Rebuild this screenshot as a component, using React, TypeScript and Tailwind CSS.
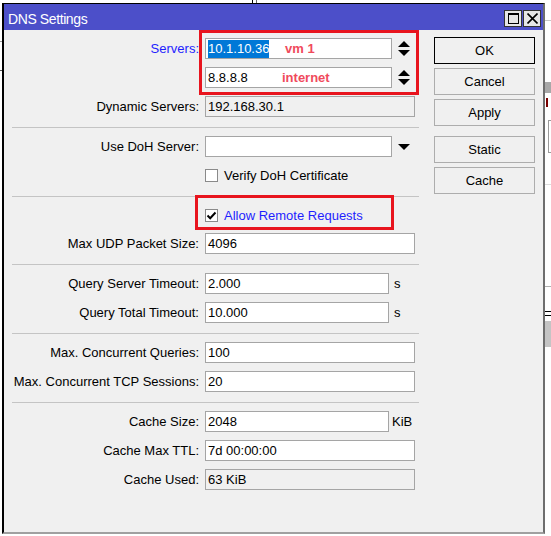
import React from 'react'

const Input = ({ w, ro, children }: { w: string; ro?: boolean; children?: React.ReactNode }) => (
  <div className={`relative flex h-[21px] items-center border border-[#a5a5a5] pl-[2px] ${w} ${ro ? 'bg-[#f0f0f0]' : 'bg-white'}`}>
    {children}
  </div>
)

const Row = ({ label, blue, tall, children }: { label?: string; blue?: boolean; tall?: boolean; children: React.ReactNode }) => (
  <div className={`flex items-center ${tall ? 'h-[20px]' : 'h-[21px]'}`}>
    <div className={`mr-[6px] w-[187px] text-right whitespace-nowrap ${blue ? 'text-[#1e1eff]' : ''}`}>{label}</div>
    {children}
  </div>
)

const Sep = () => (
  <div className="h-[3px] pt-[2px]">
    <div className="h-px bg-[#c4c4c4]" />
  </div>
)

const Spinner = () => (
  <svg className="ml-[6px]" width="12" height="15" viewBox="0 0 12 15">
    <polygon points="0,6 6,0 12,6" fill="#000" />
    <polygon points="0,9 12,9 6,15" fill="#000" />
  </svg>
)

const Btn = ({ label, def }: { label: string; def?: boolean }) => (
  <div className={`flex h-[27px] items-center justify-center bg-[#f0f0f0] border ${def ? 'border-black' : 'border-[#adadad]'}`}>
    {label}
  </div>
)

const Check = ({ on }: { on?: boolean }) => (
  <div className="flex h-[13px] w-[13px] items-center justify-center border border-[#8a8a8a] bg-white">
    {on && (
      <svg width="11" height="11" viewBox="0 0 11 11">
        <path d="M1.5 5.5 L4.2 8.2 L9.5 2.5" stroke="#000" strokeWidth="2" fill="none" />
      </svg>
    )}
  </div>
)

export default function App() {
  return (
    <div className="relative h-[536px] w-[551px] overflow-hidden bg-white text-[13px] leading-[15px] text-black font-['Liberation_Sans',Arial,sans-serif]">
      <div className="flex h-[3px]">
        <div className="ml-[252px] w-px bg-black" />
        <div className="ml-[3px] w-px bg-[#666]" />
      </div>

      <div className="flex">
        <div className="flex w-[2px] flex-col">
          <div className="mt-[38px] h-px bg-[#9a9a9a]" />
          <div className="mt-[28px] h-px bg-[#555]" />
        </div>

        <div className="flex h-[531px] w-[543px] flex-col border-t border-l-2 border-r-2 border-b-2 border-t-black border-l-black border-r-[#6e6e6e] border-b-[#a0a0a0] bg-[#f0f0f0]">
          <div className="flex h-[26px] shrink-0 justify-between bg-[#4c4fc9] pl-[4px] pr-[2px]">
            <span className="mb-[3px] self-end text-[14px] leading-[16px] tracking-[-0.4px] text-white">DNS Settings</span>
            <div className="mb-[3px] flex gap-px self-end">
              <div className="flex h-[17px] w-[18px] items-center justify-center border border-[#333] bg-[#e6e6e6]">
                <div className="h-[11px] w-[11px] border border-black border-t-2" />
              </div>
              <div className="flex h-[17px] w-[18px] items-center justify-center border border-[#333] bg-[#e6e6e6]">
                <svg width="11" height="11" viewBox="0 0 11 11">
                  <path d="M0.5 0.5 L10.5 10.5 M10.5 0.5 L0.5 10.5" stroke="#000" strokeWidth="1.6" />
                </svg>
              </div>
            </div>
          </div>

          <div className="flex pl-[8px]">
            <div className="flex w-[407px] flex-col gap-2 pt-[8px]">
              <Row label="Servers:" blue>
                <Input w="w-[187px]">
                  <span className="bg-[#0078d7] leading-[18px] text-white">10.1.10.36</span>
                  <span className="absolute left-[79px] font-bold text-[#f04a5c]">vm 1</span>
                </Input>
                <Spinner />
              </Row>
              <Row>
                <Input w="w-[187px]">
                  <span>8.8.8.8</span>
                  <span className="absolute left-[76px] font-bold text-[#f04a5c]">internet</span>
                </Input>
                <Spinner />
              </Row>
              <Row label="Dynamic Servers:">
                <Input w="w-[210px]" ro>192.168.30.1</Input>
              </Row>
              <Sep />
              <Row label="Use DoH Server:">
                <Input w="w-[187px]" />
                <svg className="ml-[6px]" width="12" height="6" viewBox="0 0 12 6">
                  <polygon points="0,0 12,0 6,6" fill="#000" />
                </svg>
              </Row>
              <Row>
                <Check />
                <span className="ml-[6px]">Verify DoH Certificate</span>
              </Row>
              <Sep />
              <Row tall>
                <Check on />
                <span className="ml-[6px] text-[#1e1eff]">Allow Remote Requests</span>
              </Row>
              <Row label="Max UDP Packet Size:">
                <Input w="w-[210px]">4096</Input>
              </Row>
              <Sep />
              <Row label="Query Server Timeout:">
                <Input w="w-[184px]">2.000</Input>
                <span className="ml-[5px]">s</span>
              </Row>
              <Row label="Query Total Timeout:">
                <Input w="w-[184px]">10.000</Input>
                <span className="ml-[5px]">s</span>
              </Row>
              <Sep />
              <Row label="Max. Concurrent Queries:">
                <Input w="w-[210px]">100</Input>
              </Row>
              <Row label="Max. Concurrent TCP Sessions:">
                <Input w="w-[210px]">20</Input>
              </Row>
              <Sep />
              <Row label="Cache Size:">
                <Input w="w-[184px]">2048</Input>
                <span className="ml-[3px]">KiB</span>
              </Row>
              <Row label="Cache Max TTL:">
                <Input w="w-[210px]">7d 00:00:00</Input>
              </Row>
              <Row label="Cache Used:">
                <Input w="w-[210px]" ro>63 KiB</Input>
              </Row>
            </div>

            <div className="ml-[15px] flex w-[101px] flex-col gap-1 pt-[7px]">
              <Btn label="OK" def />
              <Btn label="Cancel" />
              <Btn label="Apply" />
              <div className="mt-[6px]">
                <Btn label="Static" />
              </div>
              <Btn label="Cache" />
            </div>
          </div>
        </div>

        <div className="flex w-[6px] flex-col overflow-hidden">
          <div className="mt-[17px] h-px bg-[#c8c8c8]" />
          <div className="mt-[61px] h-[11px] bg-[#a8a8a8]" />
          <div className="ml-[1px] mt-[5px] h-[9px] w-[2px] bg-[#7a0000]" />
          <div className="ml-[3px] mt-[13px] h-[33px] border-y border-l border-[#9a9a9a]" />
          <div className="mt-[31px] h-px bg-[#dcdcdc]" />
          <div className="mt-[101px] h-px bg-[#b0b0b0]" />
          <div className="mt-[24px] h-px bg-black" />
          <div className="mt-[3px] h-px bg-black" />
          <div className="mt-[5px] h-[26px] bg-[#c4c4c4]" />
        </div>
      </div>

      <div className="pointer-events-none absolute left-[199px] top-[30px] h-[65px] w-[220px] border-[3px] border-[#e8141e]" />
      <div className="pointer-events-none absolute left-[195px] top-[195px] h-[35px] w-[199px] border-[3px] border-[#e8141e]" />
    </div>
  )
}
